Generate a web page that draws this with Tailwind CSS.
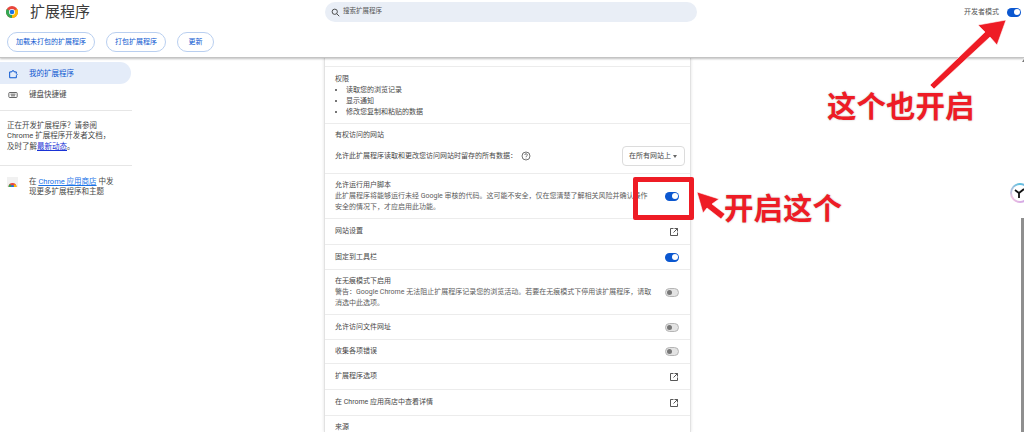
<!DOCTYPE html>
<html lang="zh-CN">
<head>
    <meta charset="UTF-8">
    <title>扩展程序</title>
    <script src="https://cdn.jsdelivr.net/npm/@tailwindcss/browser@4"></script>
</head>
<body class="bg-white overflow-hidden font-['Roboto','Noto_Sans_CJK_SC',sans-serif] text-[#474747]">
<div class="relative w-[1024px] h-[432px] overflow-hidden">

    <!-- Header -->
    <header class="relative z-10 h-[58px] bg-white border-b border-[#c4c4c4] shadow-[0_1px_2px_rgba(0,0,0,0.25)]">
        <div class="h-[24px] flex items-center">
            <svg class="ml-[6px] w-[12px] h-[12px]" viewBox="0 0 24 24">
                <circle cx="12" cy="12" r="12" fill="#e8453c"/>
                <path d="M12 12 L1.6 6 A12 12 0 0 0 12 24 Z" fill="#34a853"/>
                <path d="M12 12 L12 24 A12 12 0 0 0 22.4 6 Z" fill="#fbbc05"/>
                <circle cx="12" cy="12" r="6" fill="white"/>
                <circle cx="12" cy="12" r="4.6" fill="#1a73e8"/>
            </svg>
            <h1 class="ml-[12px] w-[295px] text-[15px] leading-none text-[#3c3c3c]">扩展程序</h1>
            <div class="w-[372px] h-[20px] rounded-full bg-[#e9eef6] flex items-center pl-[6px]">
                <svg class="w-[9px] h-[9px] text-[#444]" viewBox="0 0 24 24" fill="none" stroke="currentColor" stroke-width="2.5"><circle cx="10" cy="10" r="7"/><path d="M15 15l7 7"/></svg>
                <span class="ml-[3px] text-[6.5px] text-[#555]">搜索扩展程序</span>
            </div>
            <span class="ml-auto text-[7px] text-[#555]">开发者模式</span>
            <div class="ml-[8px] mr-[3px] w-[14px] h-[9px] rounded-full bg-[#0b57d0] flex items-center justify-end px-[1.5px]"><div class="w-[6px] h-[6px] rounded-full bg-white"></div></div>
        </div>
        <div class="mt-[8px] flex pl-[7px] gap-[11px] text-[7px] text-[#0b57d0]">
            <button class="w-[88px] h-[20px] rounded-full border border-[#b9cff0]">加载未打包的扩展程序</button>
            <button class="w-[60px] h-[20px] rounded-full border border-[#b9cff0]">打包扩展程序</button>
            <button class="w-[37px] h-[20px] rounded-full border border-[#b9cff0]">更新</button>
        </div>
    </header>

    <div class="flex h-[374px]">
        <!-- Sidebar -->
        <aside class="w-[324px] shrink-0">
            <div class="w-[132px]">
                <div class="mt-[4px] h-[22px] w-[131px] rounded-r-full bg-[#e4ecf9] flex items-center pl-[8px] pt-[1px] text-[7.5px] text-[#0b57d0]">
                    <svg class="w-[10px] h-[10px]" viewBox="0 0 24 24" fill="none" stroke="currentColor" stroke-width="2.4"><path d="M4 7h5a3 3 0 0 1 6 0h5v4a3 3 0 0 1 0 5v5H4z"/></svg>
                    <span class="ml-[11px]">我的扩展程序</span>
                </div>
                <div class="h-[21px] flex items-center pl-[8px] pt-[1px] text-[7.5px] text-[#474747]">
                    <svg class="w-[10px] h-[10px]" viewBox="0 0 24 24" fill="none" stroke="currentColor" stroke-width="2"><rect x="2" y="6" width="20" height="12" rx="2"/><path d="M6 10h12M7 14h10"/></svg>
                    <span class="ml-[11px]">键盘快捷键</span>
                </div>
                <div class="mt-[5px] border-t border-[#e6e6e6] pt-[10px] pb-[13px] pl-[7px] text-[7.5px] leading-[10.3px]">
                    <p>正在开发扩展程序？请参阅</p>
                    <p>Chrome 扩展程序开发者文档，</p>
                    <p>及时了解<a class="text-[#1a33d6] underline">最新动态</a>。</p>
                </div>
                <div class="border-t border-[#e6e6e6] pt-[11px] flex text-[7.5px] leading-[10px]">
                    <div class="ml-[7px] w-[11px] h-[10px] bg-[#f1f1f1] flex items-end justify-center">
                        <svg class="w-[9px] h-[6px]" viewBox="0 0 18 12">
                            <path d="M1 12A8 8 0 0 1 17 12Z" fill="#e8453c"/>
                            <path d="M1 12A8 8 0 0 1 4 6L9 12Z" fill="#34a853"/>
                            <path d="M17 12A8 8 0 0 0 14 6L9 12Z" fill="#fbbc05"/>
                            <circle cx="9" cy="11" r="3" fill="#1a73e8"/>
                        </svg>
                    </div>
                    <div class="ml-[11px] w-[92px]">
                        <p>在 <a class="text-[#1a73e8] underline">Chrome 应用商店</a> 中发</p>
                        <p>现更多扩展程序和主题</p>
                    </div>
                </div>
            </div>
        </aside>

        <!-- Detail card -->
        <main class="w-[367px] shrink-0 border-x border-[#e2e2e2] shadow-[0_0_3px_rgba(0,0,0,0.12)] text-[7px] leading-[11px] divide-y divide-[#ececec]">
            <div class="h-[9px]"></div>
            <section class="h-[57px] px-[10px] pt-[7px]">
                <p>权限</p>
                <ul class="list-disc pl-[11px]">
                    <li>读取您的浏览记录</li>
                    <li>显示通知</li>
                    <li>修改您复制和粘贴的数据</li>
                </ul>
            </section>
            <section class="h-[50px] pl-[10px] pr-[5px] pt-[6px]">
                <p>有权访问的网站</p>
                <div class="mt-[5px] flex items-center justify-between">
                    <div class="flex items-center">
                        <span>允许此扩展程序读取和更改您访问网站时留存的所有数据：</span>
                        <svg class="ml-[4px] w-[10px] h-[10px]" viewBox="0 0 20 20" fill="none" stroke="#444" stroke-width="1.5"><circle cx="10" cy="10" r="8"/><path d="M7.6 8a2.5 2.5 0 1 1 3.6 2.2c-.8.4-1.2 1-1.2 1.8M10 13.6v1.2"/></svg>
                    </div>
                    <div class="w-[63px] h-[20px] rounded-[4px] border border-[#dcdcdc] flex items-center pl-[6px] pr-[7px] justify-between">
                        <span>在所有网站上</span>
                        <span class="w-0 h-0 border-x-[2px] border-x-transparent border-t-[3px] border-t-[#666]"></span>
                    </div>
                </div>
            </section>
            <section class="h-[45px] pl-[10px] pr-[11px] flex items-center justify-between">
                <div class="w-[314px]">
                    <p>允许运行用户脚本</p>
                    <p class="text-[#5c5c5c]">此扩展程序将能够运行未经 Google 审核的代码。这可能不安全，仅在您清楚了解相关风险并确认操作安全的情况下，才应启用此功能。</p>
                </div>
                <div class="w-[14px] h-[9px] rounded-full bg-[#0b57d0] flex items-center justify-end px-[1.5px]"><div class="w-[6px] h-[6px] rounded-full bg-white"></div></div>
            </section>
            <section class="h-[26px] pl-[10px] pr-[11px] flex items-center justify-between">
                <span>网站设置</span>
                <svg class="w-[10px] h-[10px]" viewBox="0 0 20 20" fill="none" stroke="#444" stroke-width="1.8"><path d="M9 3H3v14h14v-6M11 3h6v6M17 3 9 11"/></svg>
            </section>
            <section class="h-[25px] pl-[10px] pr-[11px] flex items-center justify-between">
                <span>固定到工具栏</span>
                <div class="w-[14px] h-[9px] rounded-full bg-[#0b57d0] flex items-center justify-end px-[1.5px]"><div class="w-[6px] h-[6px] rounded-full bg-white"></div></div>
            </section>
            <section class="h-[45px] pl-[10px] pr-[11px] flex items-center justify-between">
                <div class="w-[320px] pt-[1px]">
                    <p>在无痕模式下启用</p>
                    <p class="text-[#5c5c5c]">警告：Google Chrome 无法阻止扩展程序记录您的浏览活动。若要在无痕模式下停用该扩展程序，请取消选中此选项。</p>
                </div>
                <div class="w-[14px] h-[9px] rounded-full bg-[#e3e3e3] border border-[#b5b5b5] flex items-center px-[1px]"><div class="w-[5px] h-[5px] rounded-full bg-[#777]"></div></div>
            </section>
            <section class="h-[25px] pl-[10px] pr-[11px] flex items-center justify-between">
                <span>允许访问文件网址</span>
                <div class="w-[14px] h-[9px] rounded-full bg-[#e3e3e3] border border-[#b5b5b5] flex items-center px-[1px]"><div class="w-[5px] h-[5px] rounded-full bg-[#777]"></div></div>
            </section>
            <section class="h-[24px] pl-[10px] pr-[11px] flex items-center justify-between">
                <span>收集各项错误</span>
                <div class="w-[14px] h-[9px] rounded-full bg-[#e3e3e3] border border-[#b5b5b5] flex items-center px-[1px]"><div class="w-[5px] h-[5px] rounded-full bg-[#777]"></div></div>
            </section>
            <section class="h-[26px] pl-[10px] pr-[11px] flex items-center justify-between">
                <span>扩展程序选项</span>
                <svg class="w-[10px] h-[10px]" viewBox="0 0 20 20" fill="none" stroke="#444" stroke-width="1.8"><path d="M9 3H3v14h14v-6M11 3h6v6M17 3 9 11"/></svg>
            </section>
            <section class="h-[26px] pl-[10px] pr-[11px] flex items-center justify-between">
                <span>在 Chrome 应用商店中查看详情</span>
                <svg class="w-[10px] h-[10px]" viewBox="0 0 20 20" fill="none" stroke="#444" stroke-width="1.8"><path d="M9 3H3v14h14v-6M11 3h6v6M17 3 9 11"/></svg>
            </section>
            <section class="px-[10px] pt-[6px]"><p>来源</p></section>
        </main>
    </div>

    <!-- Scrollbar and floating extension button -->
    <div class="absolute left-[1021px] top-[218px] w-[3px] h-[214px] bg-[#8f8f8f]"></div>
    <div class="absolute left-[1022px] top-[59px] z-20 w-0 h-0 border-x-[2px] border-x-transparent border-b-[3px] border-b-[#777]"></div>
    <div class="absolute left-[1010px] top-[183px] w-[20px] h-[20px] rounded-full bg-[conic-gradient(#5bc0de,#c79be8,#f0c4e0,#5bc0de)] flex items-center justify-center">
        <div class="w-[16px] h-[16px] rounded-full bg-white flex items-center justify-center">
            <svg class="w-[12px] h-[12px]" viewBox="0 0 12 12" fill="none" stroke="#111" stroke-width="1.8"><path d="M1 3l4 3v5M5 6l5-4"/></svg>
        </div>
    </div>

    <!-- Red annotations -->
    <div class="absolute z-20 left-[633px] top-[177px] w-[61px] h-[43px] border-[5px] border-[#ee1c25] rounded-[2px]"></div>
    <svg class="absolute z-20 left-0 top-0 w-[1024px] h-[432px] pointer-events-none" viewBox="0 0 1024 432">
        <g fill="#ee1c25" stroke="#fff" stroke-width="0.6" stroke-linejoin="round">
            <path d="M1006 20 L997 45 L990 37 L934 89 L930 85 L985 32 L978 25 Z"/>
            <path d="M697 192 L719 199 L712 204 L725 214 L721 219 L707 208 L703 213 Z"/>
        </g>
    </svg>
    <div class="absolute z-20 left-[724px] top-[188px] text-[29.5px] leading-[36px] font-bold text-[#ee1c25] whitespace-nowrap font-['Noto_Sans_CJK_SC',sans-serif] [text-shadow:0_0_2px_#bbb]">开启这个</div>
    <div class="absolute z-20 left-[827px] top-[86px] text-[29.5px] leading-[36px] font-bold text-[#ee1c25] whitespace-nowrap font-['Noto_Sans_CJK_SC',sans-serif] [text-shadow:0_0_2px_#bbb]">这个也开启</div>
</div>
</body>
</html>
